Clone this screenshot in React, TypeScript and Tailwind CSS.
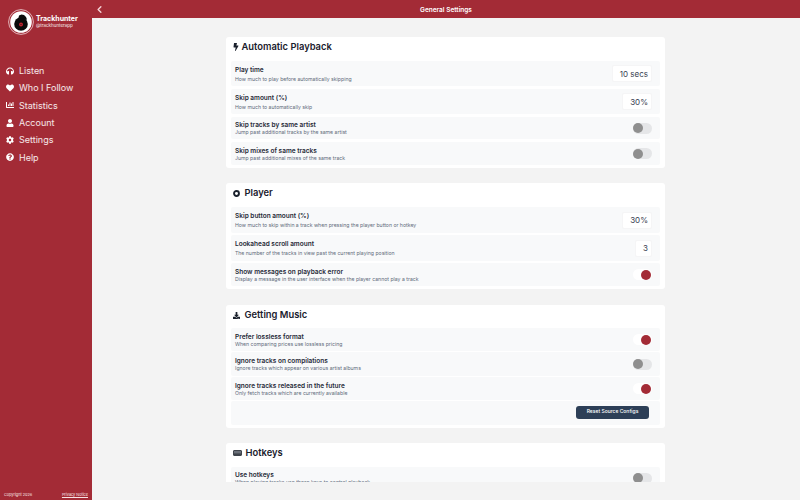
import type { ReactNode } from "react";
import {
  FaBolt,
  FaChartBar,
  FaCog,
  FaDownload,
  FaHeadphones,
  FaHeart,
  FaQuestionCircle,
  FaUser,
} from "react-icons/fa";
import { ChevronLeft } from "lucide-react";

const navItems = [
  { icon: FaHeadphones, label: "Listen" },
  { icon: FaHeart, label: "Who I Follow" },
  { icon: FaChartBar, label: "Statistics" },
  { icon: FaUser, label: "Account" },
  { icon: FaCog, label: "Settings" },
  { icon: FaQuestionCircle, label: "Help" },
];

function Logo() {
  return (
    <svg viewBox="0 0 26 26" className="h-[26px] w-[26px] shrink-0">
      <circle cx="13" cy="13" r="12.4" fill="none" stroke="#f3d9dc" strokeWidth="0.8" />
      <circle cx="13" cy="13" r="10.8" fill="#ffffff" />
      <circle cx="13" cy="15" r="6.8" fill="#0b0b0b" />
      <path d="M10.5 9 L11 6.5 L13.5 5.5 L16 6 L18 8 L19 10.5 L16.5 10.5 L14 9.5 Z" fill="#0b0b0b" />
      <circle cx="13" cy="15.5" r="2" fill="#c0242f" />
      <circle cx="13" cy="15.5" r="0.5" fill="#0b0b0b" />
    </svg>
  );
}

function Sidebar() {
  return (
    <aside className="flex w-[92px] shrink-0 flex-col bg-[#a32b36] text-white">
      <div className="flex items-center gap-[2px] pl-[8px] pt-[9px]">
        <Logo />
        <div className="pb-[1px]">
          <div className="text-[7px] font-bold leading-[9px]">Trackhunter</div>
          <div className="text-[4.5px] leading-[6px] text-white/90">@trackhunterapp</div>
        </div>
      </div>
      <nav className="mt-[27px] flex flex-col">
        {navItems.map((item) => (
          <div key={item.label} className="flex h-[17.3px] items-center gap-[5px] pl-[6px]">
            <item.icon className="h-[8px] w-[8px] shrink-0" />
            <span className="text-[9px] leading-none text-white/90">{item.label}</span>
          </div>
        ))}
      </nav>
      <div className="mt-auto flex items-center justify-between pb-[2px] pl-[4px] pr-[4px] text-[3.8px] leading-[6px] text-[#f8e3e5]">
        <span>Copyright 2026</span>
        <span className="underline">Privacy Notice</span>
      </div>
    </aside>
  );
}

function Card({
  icon,
  title,
  children,
  mb,
  headClass,
}: {
  icon: ReactNode;
  title: string;
  children: ReactNode;
  mb?: string;
  headClass: string;
}) {
  return (
    <section className={`w-[439px] shrink-0 rounded-[3px] bg-white px-[5px] pb-[3px] ${mb ?? ""}`}>
      <div className={`flex h-[20px] items-center pl-[1.5px] ${headClass}`}>
        {icon}
        <h2 className="text-[9.4px] font-semibold leading-none text-[#1a202c]">{title}</h2>
      </div>
      <div className="flex flex-col">{children}</div>
    </section>
  );
}

function Row({
  title,
  description,
  h,
  control,
  spaced,
}: {
  title: string;
  description: string;
  h: string;
  control?: ReactNode;
  spaced?: boolean;
}) {
  return (
    <div className={`flex items-center justify-between rounded-[2px] bg-[#f8f9fa] pl-[4px] pr-[8px] ${h}`}>
      <div>
        <div className="text-[6.5px] font-semibold leading-[8px] text-[#1f2937]">{title}</div>
        <div className={`text-[5.15px] leading-[6px] text-[#5f6b7a] ${spaced ? "mt-[2px]" : ""}`}>{description}</div>
      </div>
      {control}
    </div>
  );
}

function Value({ text, w }: { text: string; w: string }) {
  return (
    <div className={`flex h-[17px] items-center justify-end rounded-[2px] border border-[#f5f5f6] bg-white pr-[3px] text-[8px] text-[#374151] ${w}`}>
      {text}
    </div>
  );
}

function Toggle({ on }: { on?: boolean }) {
  return (
    <div className={`flex h-[11px] w-[19px] items-center rounded-full ${on ? "justify-end bg-white pr-[1px]" : "justify-start bg-[#e5e6e8]"}`}>
      <div className={`h-[10px] w-[10px] rounded-full ${on ? "bg-[#a32b36]" : "bg-[#8f8f8f]"}`} />
    </div>
  );
}

export default function App() {
  return (
    <div className="flex h-[500px] w-[800px] overflow-hidden bg-[#f3f3f3] font-['Inter',sans-serif]">
      <Sidebar />
      <main className="flex min-w-0 flex-1 flex-col">
        <header className="relative flex h-[18px] shrink-0 items-center justify-center bg-[#a32b36] pt-[2px] text-white">
          <ChevronLeft className="absolute left-[2px] top-[4px] h-[11px] w-[11px] text-[#f6d5d8]" strokeWidth={3} />
          <span className="text-[6.5px] font-semibold leading-none">General Settings</span>
        </header>
        <div className="flex h-[464px] flex-col items-center overflow-hidden pr-[1px] pt-[19px]">
          <Card mb="mb-[15px]" headClass="mb-[4px] gap-[3px]" icon={<FaBolt className="h-[8px] w-[6px] text-[#1a202c]" />} title="Automatic Playback">
            <div className="flex flex-col gap-[3px]">
              <Row spaced h="h-[25px]" title="Play time" description="How much to play before automatically skipping" control={<Value text="10 secs" w="w-[40px]" />} />
              <Row spaced h="h-[25px]" title="Skip amount (%)" description="How much to automatically skip" control={<Value text="30%" w="w-[30px]" />} />
              <Row h="h-[22px]" title="Skip tracks by same artist" description="Jump past additional tracks by the same artist" control={<Toggle />} />
              <Row h="h-[23px]" title="Skip mixes of same tracks" description="Jump past additional mixes of the same track" control={<Toggle />} />
            </div>
          </Card>
          <Card
            mb="mb-[16px]"
            headClass="mb-[4px] gap-[5px]"
            icon={
              <svg viewBox="0 0 8 8" className="h-[7px] w-[7px]">
                <circle cx="4" cy="4" r="2.8" fill="none" stroke="#1a202c" strokeWidth="2.2" />
              </svg>
            }
            title="Player"
          >
            <div className="flex flex-col gap-[2px]">
              <Row spaced h="h-[26px]" title="Skip button amount (%)" description="How much to skip within a track when pressing the player button or hotkey" control={<Value text="30%" w="w-[30px]" />} />
              <Row spaced h="h-[26px]" title="Lookahead scroll amount" description="The number of the tracks in view past the current playing position" control={<Value text="3" w="w-[17px]" />} />
              <Row h="h-[23px]" title="Show messages on playback error" description="Display a message in the user interface when the player cannot play a track" control={<Toggle on />} />
            </div>
          </Card>
          <Card mb="mb-[15px]" headClass="mb-[3px] gap-[5px]" icon={<FaDownload className="h-[7px] w-[7px] text-[#1a202c]" />} title="Getting Music">
            <div className="flex flex-col gap-[1px]">
              <Row h="h-[23px]" title="Prefer lossless format" description="When comparing prices use lossless pricing" control={<Toggle on />} />
              <Row h="h-[24px]" title="Ignore tracks on compilations" description="Ignore tracks which appear on various artist albums" control={<Toggle />} />
              <Row h="h-[23px]" title="Ignore tracks released in the future" description="Only fetch tracks which are currently available" control={<Toggle on />} />
              <div className="flex h-[24px] items-center justify-end rounded-[2px] bg-[#f8f9fa] pb-[2px] pr-[11px]">
                <button className="h-[13px] w-[73px] rounded-[3px] bg-[#2d3f57] text-[5px] font-medium text-white">Reset Source Configs</button>
              </div>
            </div>
          </Card>
          <Card
            headClass="mb-[4px] gap-[4px]"
            icon={
              <svg viewBox="0 0 9 6" className="h-[6px] w-[9px] rounded-[1px]">
                <rect width="9" height="6" rx="1" fill="#3f444c" />
                <rect x="1" y="1" width="7" height="2.4" fill="#6b7079" />
              </svg>
            }
            title="Hotkeys"
          >
            <Row h="h-[22px]" title="Use hotkeys" description="When playing tracks use these keys to control playback" control={<Toggle />} />
          </Card>
        </div>
      </main>
    </div>
  );
}
